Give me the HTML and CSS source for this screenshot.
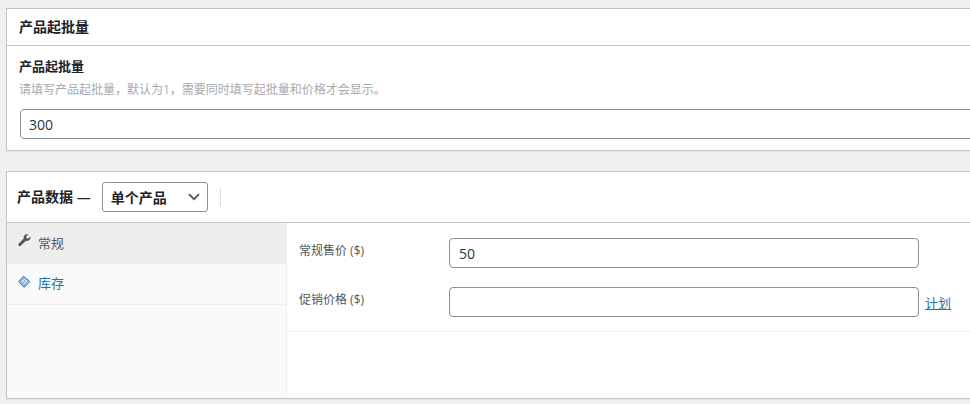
FILE: index.html
```html
<!DOCTYPE html>
<html lang="zh-CN">
<head>
  <meta charset="UTF-8">
  <title>产品起批量</title>
  <link rel="stylesheet" href="styles.css">
</head>
<body>
  <!-- Minimum order box -->
  <div class="postbox moq-box">
    <h2 class="postbox-title">产品起批量</h2>
    <div class="moq-inside">
      <label class="moq-label">产品起批量</label>
      <p class="moq-desc">请填写产品起批量，默认为1，需要同时填写起批量和价格才会显示。</p>
      <input class="text-input moq-input" type="text" value="300">
    </div>
  </div>

  <!-- Product data box -->
  <div class="postbox data-box">
    <div class="data-head">
      <span class="data-title">产品数据 —</span>
      <div class="type-select">
        <span>单个产品</span>
        <svg class="chevron" width="12" height="8" viewBox="0 0 12 8"><path d="M1 1.2 6 6.2 11 1.2" fill="none" stroke="#50575e" stroke-width="1.8"/></svg>
      </div>
      <span class="head-sep"></span>
    </div>
    <div class="data-body">
      <ul class="tabs">
        <li class="tab tab-active">
          <svg class="tab-icon" width="13" height="13" viewBox="0 0 13 13"><path d="M12.4 2.6 10.2 4.6 8.500 4.200 8.200 2.600 10.300.5C8.800-.1 7.400.3 6.500 1.200 5.600 2.100 5.400 3.400 5.800 4.500L.9 9.400C.2 10.100.2 11.100.8 11.700 1.400 12.300 2.400 12.300 3 11.600L7.900 6.800C9.100 7.200 10.400 6.900 11.300 6 12.300 5.100 12.700 3.800 12.400 2.600Z" fill="#555"/></svg>
          <span>常规</span>
        </li>
        <li class="tab">
          <svg class="tab-icon" width="13" height="13" viewBox="0 0 13 13"><path d="M5.500 1.200 11.800 6.500 6.200 12.400 .6 6.500Z" fill="#8fb4da" stroke="#3d7ab5" stroke-width="1"/><path d="M3.500 4.500 8.500 9.500M5.500 3.500 10 8M7.500 3.500 3 8M9.500 5 5 9.800" stroke="#e4edf6" stroke-width=".7" fill="none"/></svg>
          <span class="tab-link">库存</span>
        </li>
      </ul>
      <div class="panel">
        <div class="fields">
          <div class="field">
            <label class="field-label">常规售价 ($)</label>
            <input class="text-input price-input" type="text" value="50">
          </div>
          <div class="field">
            <label class="field-label">促销价格 ($)</label>
            <input class="text-input price-input" type="text" value="">
            <a href="#" class="schedule">计划</a>
          </div>
        </div>
      </div>
    </div>
  </div>
</body>
</html>
```

FILE: styles.css
```css
* {
  box-sizing: border-box;
  margin: 0;
  padding: 0;
}

html, body {
  height: 404px;
  overflow: hidden;
}

body {
  width: 1010px;
  padding: 8px 0 0 6px;
  background: #f0f0f1;
  color: #3c434a;
  font-family: "Open Sans", "Noto Sans CJK SC", sans-serif;
  font-size: 13px;
}

.postbox {
  background: #fff;
  border: 1px solid #c3c4c7;
  box-shadow: 0 1px 1px rgba(0, 0, 0, 0.04);
}

.moq-box {
  height: 143px;
}

.postbox-title {
  height: 37px;
  padding-left: 12px;
  border-bottom: 1px solid #c3c4c7;
  color: #1d2327;
  font-size: 14px;
  font-weight: 700;
  line-height: 36px;
}

.moq-inside {
  padding: 11px 0 0 13px;
}

.moq-label {
  display: block;
  color: #1d2327;
  font-size: 13px;
  font-weight: 700;
  line-height: 18px;
  margin-left: -1px;
}

.moq-desc {
  margin: 6px 0 0 -1px;
  color: #a7aaad;
  font-size: 12px;
  line-height: 18px;
}

.text-input {
  height: 30px;
  padding: 0 8px;
  border: 1px solid #8c8f94;
  border-radius: 4px;
  background: #fff;
  color: #2c3338;
  font-family: inherit;
  font-size: 14px;
  outline: none;
}

.moq-input {
  display: block;
  width: 970px;
  margin-top: 10px;
}

.data-box {
  height: 228px;
  margin-top: 20px;
}

.data-head {
  display: flex;
  align-items: center;
  height: 51px;
  padding-left: 10px;
  border-bottom: 1px solid #c3c4c7;
}

.data-title {
  margin-top: -3px;
  color: #1d2327;
  font-size: 14px;
  font-weight: 600;
}

.type-select {
  display: flex;
  align-items: center;
  justify-content: space-between;
  width: 106px;
  height: 30px;
  margin-left: 11px;
  padding: 0 7px 0 8px;
  border: 1px solid #8c8f94;
  border-radius: 3px;
  color: #1d2327;
  font-size: 14px;
  font-weight: 600;
}

.head-sep {
  width: 1px;
  height: 18px;
  margin-left: 12px;
  background: #dcdcde;
}

.data-body {
  display: flex;
  height: 175px;
}

.tabs {
  width: 280px;
  flex-shrink: 0;
  background: #fafafa;
  border-right: 1px solid #eee;
  list-style: none;
}

.tab {
  display: flex;
  align-items: center;
  gap: 7px;
  height: 41px;
  padding: 0 0 1px 11px;
  border-bottom: 1px solid #eee;
  color: #555;
  font-size: 13px;
}

.tab-active {
  background: #eee;
}

.tab-link {
  margin-top: -2px;
  color: #2271b1;
}

.tab-icon {
  margin-top: -5px;
}

.panel {
  flex: 1;
}

.fields {
  height: 109px;
  padding-top: 15px;
  border-bottom: 1px solid #eee;
}

.field {
  display: flex;
  align-items: center;
  height: 30px;
  margin-bottom: 19px;
  padding-left: 12px;
}

.field-label {
  width: 150px;
  margin-top: -6px;
  color: #50575e;
  font-size: 12px;
}

.price-input {
  width: 470px;
  padding: 0 9px;
}

.schedule {
  margin-left: 6px;
  color: #2271b1;
  font-size: 13px;
}
```
